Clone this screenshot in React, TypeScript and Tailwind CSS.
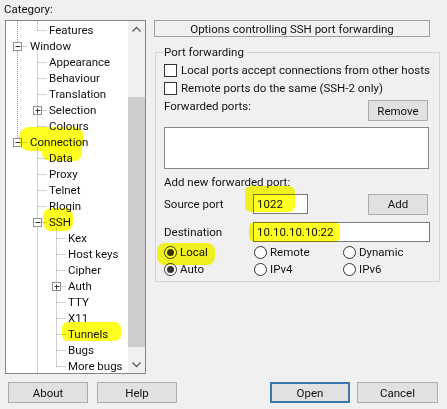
import type { ReactNode } from "react";

// ─── PuTTY Configuration: SSH › Tunnels ───────────────────────────────────────

type Row = { t: string; l: 0 | 1 | 2; e?: "+" | "-" };

const ROWS: Row[] = [
  { t: "Features", l: 1 },
  { t: "Window", l: 0, e: "-" },
  { t: "Appearance", l: 1 },
  { t: "Behaviour", l: 1 },
  { t: "Translation", l: 1 },
  { t: "Selection", l: 1, e: "+" },
  { t: "Colours", l: 1 },
  { t: "Connection", l: 0, e: "-" },
  { t: "Data", l: 1 },
  { t: "Proxy", l: 1 },
  { t: "Telnet", l: 1 },
  { t: "Rlogin", l: 1 },
  { t: "SSH", l: 1, e: "-" },
  { t: "Kex", l: 2 },
  { t: "Host keys", l: 2 },
  { t: "Cipher", l: 2 },
  { t: "Auth", l: 2, e: "+" },
  { t: "TTY", l: 2 },
  { t: "X11", l: 2 },
  { t: "Tunnels", l: 2 },
  { t: "Bugs", l: 2 },
  { t: "More bugs", l: 2 },
];

const INDENT = ["pl-[24px]", "pl-[43px]", "pl-[62px]"];
const LINE_X = [11.5, 31.5, 50.5];
const cy = (i: number) => 9.5 + i * 16;

function TreeLines() {
  const dots = { stroke: "#a0a0a0", strokeDasharray: "1 1", strokeWidth: 1 };
  const v = (x: number, y1: number, y2: number) => (
    <line x1={x} x2={x} y1={y1} y2={y2} {...dots} />
  );
  return (
    <svg className="absolute left-0 top-0" width="122" height="352">
      {v(11.5, 0, cy(7))}
      {v(31.5, 0, cy(0))}
      {v(31.5, cy(1) + 5, cy(6))}
      {v(31.5, cy(7) + 5, 352)}
      {v(50.5, cy(12) + 5, cy(21))}
      {ROWS.map((r, i) => {
        const x = LINE_X[r.l];
        const y = cy(i);
        return (
          <g key={r.t}>
            <line x1={r.e ? x + 4 : x} x2={x + 10} y1={y} y2={y} {...dots} />
            {r.e && (
              <g>
                <rect x={x - 4} y={y - 4} width="8" height="8" fill="#fff" stroke="#919191" />
                <line x1={x - 2} x2={x + 3} y1={y} y2={y} stroke="#333" />
                {r.e === "+" && <line x1={x} x2={x} y1={y - 2} y2={y + 3} stroke="#333" />}
              </g>
            )}
          </g>
        );
      })}
    </svg>
  );
}

function Button({ children, className = "" }: { children: ReactNode; className?: string }) {
  return (
    <div
      className={`h-[21px] flex items-center justify-center bg-[#e1e1e1] border border-[#adadad] ${className}`}
    >
      {children}
    </div>
  );
}

function Check({ label }: { label: string }) {
  return (
    <div className="h-[18px] flex items-center gap-[4px]">
      <span className="shrink-0 w-[13px] h-[13px] border border-[#333] bg-white" />
      <span>{label}</span>
    </div>
  );
}

function Radio({ label, on }: { label: string; on?: boolean }) {
  return (
    <div className="flex items-center gap-[3px]">
      <span className="w-[13px] h-[13px] rounded-full border border-[#333] bg-white flex items-center justify-center">
        {on && <span className="w-[7px] h-[7px] rounded-full bg-[#333]" />}
      </span>
      {label}
    </div>
  );
}

function Chevron({ up }: { up?: boolean }) {
  return (
    <svg width="17" height="17" viewBox="0 0 17 17">
      <path
        d={up ? "M4.5 10.5 L8.5 6.5 L12.5 10.5" : "M4.5 6.5 L8.5 10.5 L12.5 6.5"}
        fill="none"
        stroke="#606060"
        strokeWidth="1.4"
      />
    </svg>
  );
}

export default function App() {
  return (
    <div className="relative w-[447px] h-[409px] bg-[#f0f0f0] text-[#111] text-[11.5px] leading-[14px] whitespace-nowrap font-['Roboto',sans-serif] flex flex-col overflow-hidden">
      <div className="flex">
        {/* ── Category tree ── */}
        <div className="ml-[5px] w-[141px]">
          <div className="h-[20px] pt-[2px] -ml-px">Category:</div>
          <div className="h-[354px] border border-[#828790] bg-white flex">
            <div className="relative w-[122px] pt-px">
              <TreeLines />
              {ROWS.map((r) => (
                <div key={r.t} className={`relative h-[16px] flex items-center ${INDENT[r.l]}`}>
                  {r.t}
                </div>
              ))}
            </div>
            <div className="w-[17px] bg-[#f0f0f0] flex flex-col">
              <Chevron up />
              <div className="mt-[59px] h-[250px] bg-[#cdcdcd]" />
              <div className="flex-1" />
              <Chevron />
            </div>
          </div>
        </div>

        {/* ── Tunnels panel ── */}
        <div className="ml-[8px] w-[286px] pt-[20px]">
          <div className="w-[276px] h-[17px] border border-[#a0a0a0] flex items-center justify-center">
            Options controlling SSH port forwarding
          </div>
          <fieldset className="mt-[8px] ml-px w-[285px] border border-[#d5d5d5] pl-[8px] pr-[9px] pb-[4px]">
            <legend className="pr-[3px]">Port forwarding</legend>
            <div className="pt-[2px]">
              <Check label="Local ports accept connections from other hosts" />
              <Check label="Remote ports do the same (SSH-2 only)" />
              <div className="mt-[3px] flex items-start justify-between">
                <span className="-mt-px">Forwarded ports:</span>
                <Button className="w-[60px] mr-[2px]">Remove</Button>
              </div>
              <div className="mt-[6px] w-[265px] h-[42px] border border-[#828790] bg-white" />
              <div className="mt-[6px]">Add new forwarded port:</div>
              <div className="mt-[4px] h-[21px] flex items-center">
                <span className="w-[89px]">Source port</span>
                <div className="w-[55px] h-[20px] border border-[#7a7a7a] bg-white flex items-center pl-[3px]">
                  1022
                </div>
                <Button className="ml-auto mr-[2px] w-[60px] mt-px">Add</Button>
              </div>
              <div className="mt-[8px] h-[20px] flex items-center">
                <span className="w-[89px]">Destination</span>
                <div className="w-[177px] h-[20px] border border-[#7a7a7a] bg-white flex items-center pl-[3px]">
                  10.10.10.10:22
                </div>
              </div>
              <div className="mt-[2px] grid grid-cols-[90px_89px_auto] gap-y-[1px] [&>div]:h-[16px]">
                <Radio label="Local" on />
                <Radio label="Remote" />
                <Radio label="Dynamic" />
                <Radio label="Auto" on />
                <Radio label="IPv4" />
                <Radio label="IPv6" />
              </div>
            </div>
          </fieldset>
        </div>
      </div>

      {/* ── Bottom buttons ── */}
      <div className="mt-[8px] flex">
        <Button className="ml-[8px] w-[80px]">About</Button>
        <Button className="ml-[9px] w-[80px]">Help</Button>
        <div className="ml-[93px] w-[80px] h-[21px] flex items-center justify-center bg-[#e1e1e1] border-2 border-[#3a77ac]">
          Open
        </div>
        <Button className="ml-[7px] w-[81px]">Cancel</Button>
      </div>

      {/* ── Highlighter marks ── */}
      <div className="absolute left-[19px] top-[127px] w-[65px] h-[24px] rounded-[10px] bg-[#ffff22] mix-blend-multiply" />
      <div className="absolute left-[42px] top-[140px] w-[40px] h-[21px] rounded-[8px] bg-[#ffff22] mix-blend-multiply" />
      <div className="absolute left-[43px] top-[208px] w-[30px] h-[23px] rounded-[8px] bg-[#ffff22] mix-blend-multiply" />
      <div className="absolute left-[62px] top-[322px] w-[59px] h-[19px] rounded-[6px] bg-[#ffff22] mix-blend-multiply" />
      <div className="absolute left-[245px] top-[186px] w-[50px] h-[26px] rounded-[6px] bg-[#ffff22] mix-blend-multiply" />
      <div className="absolute left-[249px] top-[222px] w-[91px] h-[20px] rounded-[6px] bg-[#ffff22] mix-blend-multiply" />
      <div className="absolute left-[157px] top-[243px] w-[58px] h-[22px] rounded-[8px] bg-[#ffff22] mix-blend-multiply" />
    </div>
  );
}
